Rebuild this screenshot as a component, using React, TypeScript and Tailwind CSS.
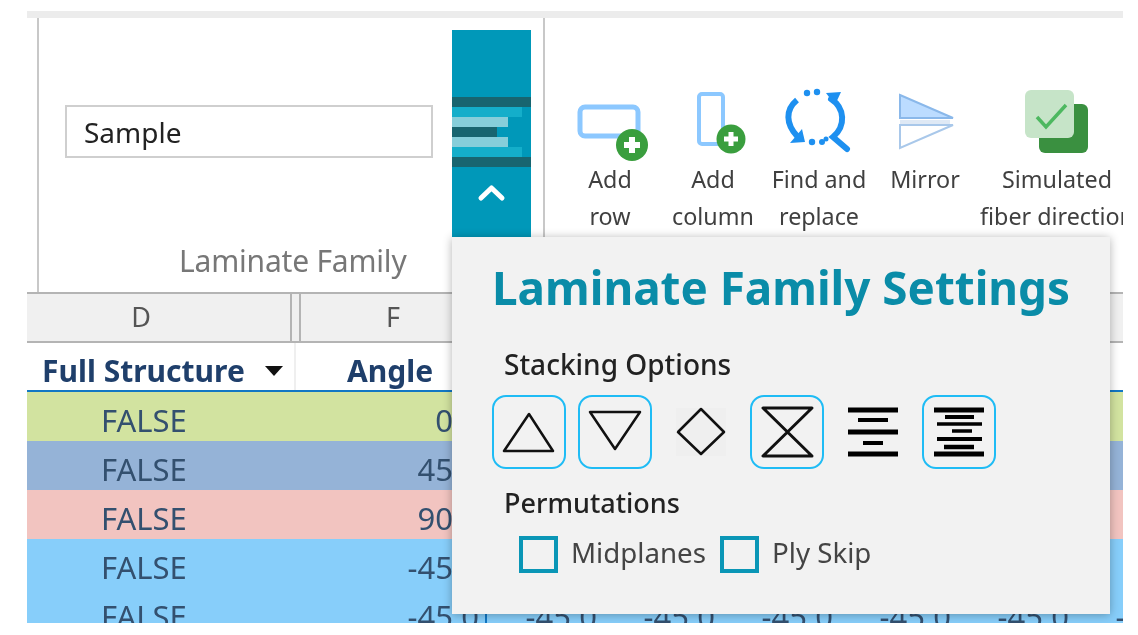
import React from "react";

const font = { fontFamily: '"Noto Sans", "Open Sans", sans-serif' };

function Action({ w, vx, lines, children }: { w: string; vx: number; lines: string[]; children: React.ReactNode }) {
  const width = parseInt(w.replace(/\D/g, ""), 10);
  return (
    <div className={`${w} shrink-0 flex flex-col items-center`}>
      <svg width={width} height={74} viewBox={`${vx} 88 ${width} 74`} className="shrink-0">
        {children}
      </svg>
      {lines.map((l) => (
        <div key={l} className="text-[23.3px] leading-[37px] pl-[2px] -mt-[1px] mb-[1px] whitespace-nowrap text-[#404040]">
          {l}
        </div>
      ))}
    </div>
  );
}

const AW = { a: "w-[128px]", b: "w-[78px]", c: "w-[134px]", d: "w-[78px]", e: "w-[186px]" };

function Stack({ on, children }: { on?: boolean; children: React.ReactNode }) {
  return (
    <div className={`w-[74px] h-[74px] rounded-[14px] border-2 ${on ? "border-[#1fbcf5]" : "border-transparent"}`}>
      <svg width={70} height={70} viewBox="0 0 70 70" fill="none" stroke="#111">
        {children}
      </svg>
    </div>
  );
}

function Check({ label }: { label: string }) {
  return (
    <div className="flex items-start">
      <div className="w-[39px] h-[37px] border-[4px] border-[#0a96b6]" />
      <div className="ml-[13px] text-[27.7px] leading-[33px] text-[#444]">{label}</div>
    </div>
  );
}

const rows = [
  { bg: "bg-[#d2e3a0]", a: "0.0" },
  { bg: "bg-[#95b3d7]", a: "45.0" },
  { bg: "bg-[#f2c4c0]", a: "90.0" },
  { bg: "bg-[#87cefa]", a: "-45.0" },
  { bg: "bg-[#87cefa]", a: "-45.0", more: true },
];

export default function App() {
  return (
    <div className="w-[1138px] h-[635px] bg-white overflow-hidden pt-[11px] pl-[27px] blur-[0.7px]" style={font}>
      <div className="relative w-[1096px] h-[612px] overflow-hidden">
        <div className="h-[7px] bg-[#ececec]" />

        {/* ribbon */}
        <div className="flex h-[274px]">
          <div className="ml-[10px] w-[508px] shrink-0 border-l-2 border-r-2 border-[#c8c8c8] flex">
            <div className="w-[413px] shrink-0 flex flex-col">
              <div className="ml-[26px] mt-[87px] w-[368px] h-[53px] border-2 border-[#cfcfcf] pl-[17px] text-[28px] leading-[51px] text-[#222]">
                Sample
              </div>
              <div className="ml-[140px] mt-[83px] text-[30px] leading-[40px] text-[#777] whitespace-nowrap tracking-[-0.2px]">
                Laminate Family
              </div>
            </div>
            <div className="w-[79px] h-[207px] mt-[12px] bg-[#0098b9] flex flex-col shrink-0">
              <div className="h-[67px]" />
              <div className="h-[10px] bg-[#186570]" />
              <div className="h-[10px] w-[70px] bg-[#14aeca]" />
              <div className="h-[10px] w-[56px] bg-[#86ceda]" />
              <div className="h-[10px] w-[45px] bg-[#186570]" />
              <div className="h-[10px] w-[56px] bg-[#86ceda]" />
              <div className="h-[10px] w-[70px] bg-[#14aeca]" />
              <div className="h-[10px] bg-[#186570]" />
              <svg width={79} height={40} viewBox="0 0 79 40" fill="none">
                <path d="M29 31 L39.5 21 L50 31" stroke="#fff" strokeWidth={5} strokeLinecap="round" strokeLinejoin="round" />
              </svg>
            </div>
          </div>

          <div className="flex pt-[70px]">
            <Action w={AW.a} vx={546} lines={["Add", "row"]}>
              <rect x={581} y={107} width={58} height={29} rx={5} fill="none" stroke="#8cc8ff" strokeWidth={5} />
              <circle cx={633} cy={145} r={16} fill="#3a9e3e" />
              <path d="M633 137 V153 M625 145 H641" stroke="#fff" strokeWidth={6} />
            </Action>
            <Action w={AW.b} vx={674} lines={["Add", "column"]}>
              <rect x={700} y={94} width={24} height={50} rx={3} fill="none" stroke="#8cc8ff" strokeWidth={4} />
              <circle cx={732} cy={139} r={14.5} fill="#3a9e3e" />
              <path d="M732 132 V146 M725 139 H739" stroke="#fff" strokeWidth={5} />
            </Action>
            <Action w={AW.c} vx={752} lines={["Find and", "replace"]}>
              <path d="M798 100 C786 110 787 124 798 136" fill="none" stroke="#1e90f0" strokeWidth={6} />
              <path d="M791 143 L806 142 L803 129 Z" fill="#1e90f0" />
              <path d="M832 99 C846 108 847 126 834 137 L848 149" fill="none" stroke="#1e90f0" strokeWidth={6} strokeLinecap="round" />
              <path d="M827 93 L842 92 L836 105 Z" fill="#1e90f0" />
              <circle cx={808} cy={93} r={3.2} fill="#1e90f0" />
              <circle cx={818} cy={92} r={3.2} fill="#1e90f0" />
              <circle cx={813} cy={142} r={3.2} fill="#1e90f0" />
              <circle cx={823} cy={142} r={3} fill="#1e90f0" />
              <circle cx={827} cy={139} r={2.5} fill="#1e90f0" />
            </Action>
            <Action w={AW.d} vx={886} lines={["Mirror"]}>
              <path d="M901 95 L954 118 L901 118 Z" fill="#bcdcff" stroke="#8ab8ea" strokeWidth={2} />
              <rect x={901} y={120} width={50} height={4} fill="#dfe9f5" />
              <path d="M901 125 L954 125 L901 148 Z" fill="none" stroke="#a9c8ea" strokeWidth={2} />
            </Action>
            <Action w={AW.e} vx={964} lines={["Simulated", "fiber direction"]}>
              <rect x={1040} y={104} width={49} height={49} rx={6} fill="#3a9040" />
              <rect x={1026} y={90} width={49} height={48} rx={6} fill="#c6e4c8" />
              <path d="M1038 117 L1047 127 L1067 105" fill="none" stroke="#4db860" strokeWidth={3.5} />
            </Action>
          </div>
        </div>

        {/* column letters */}
        <div className="h-[51px] border-t-2 border-b-2 border-[#b4b4b4] bg-[#f0f0f0] flex text-[#555] text-[27px] leading-[45px]">
          <div className="w-[265px] shrink-0 pr-[35px] text-center border-r-2 border-[#b4b4b4]">D</div>
          <div className="w-[9px] shrink-0 border-r-2 border-[#b4b4b4]" />
          <div className="w-[184px] shrink-0 text-center">F</div>
        </div>

        {/* table */}
        <div className="h-[49px] border-b-2 border-[#1277c4] flex font-bold text-[#1f3f6b] text-[30px] leading-[56px] whitespace-nowrap">
          <div className="w-[269px] shrink-0 border-r-2 border-[#efefef] flex items-start pl-[15px] relative">
            Full Structure
            <svg width={18} height={10} viewBox="0 0 18 10" className="absolute left-[238px] top-[23px]">
              <path d="M0 0 H18 L9 10 Z" fill="#111" />
            </svg>
          </div>
          <div className="ml-[51px]">Angle</div>
        </div>
        {rows.map((r, i) => (
          <div key={i} className={`${r.bg} h-[49px] flex text-[#33506f] text-[31px] leading-[56px] whitespace-nowrap`}>
            <div className="w-[269px] shrink-0 pl-[74px]">FALSE</div>
            <div className="relative w-[183px] shrink-0 text-right">
              {r.a}
              {r.more && <div className="absolute left-[189px] top-0 bottom-0 w-[2px] bg-[#1277c4]" />}
            </div>
            {r.more &&
              ["a", "b", "c", "d", "e", "f"].map((k) => (
                <div key={k} className="w-[118px] shrink-0 text-right">
                  -45.0
                </div>
              ))}
          </div>
        ))}

        {/* popover */}
        <div className="absolute left-[425px] top-[226px] w-[658px] h-[377px] bg-[#f2f2f2] shadow-[0_1px_9px_rgba(0,0,0,0.3)] px-[40px]">
          <div className="text-[45.8px] leading-[60px] mt-[20px] font-bold text-[#0a8ca8] whitespace-nowrap">
            Laminate Family Settings
          </div>
          <div className="ml-[12px] mt-[29px] text-[28px] leading-[36px] font-medium text-[#222]">Stacking Options</div>
          <div className="flex gap-[12px] mt-[13px]">
            <Stack on>
              <path d="M35 17 L10 54 H59 Z" strokeWidth={2.5} strokeLinejoin="round" />
            </Stack>
            <Stack on>
              <path d="M10 15 H60 L35 52 Z" strokeWidth={2.5} strokeLinejoin="round" />
            </Stack>
            <Stack>
              <rect x={10} y={11} width={50} height={48} fill="#efefef" stroke="none" />
              <path d="M35 12 L58 35 L35 57 L12 35 Z" strokeWidth={2.5} strokeLinejoin="round" />
            </Stack>
            <Stack on>
              <path d="M11 11 H60 L11 59 H60 Z" strokeWidth={3} strokeLinejoin="round" />
            </Stack>
            <Stack>
              <g stroke="#000">
                <path d="M10 13 H60" strokeWidth={5} />
                <path d="M20 23 H50" strokeWidth={4} />
                <path d="M10 35 H60" strokeWidth={5} />
                <path d="M25 46 H45" strokeWidth={4} />
                <path d="M10 57 H60" strokeWidth={5} />
              </g>
            </Stack>
            <Stack on>
              <g stroke="#000">
                <path d="M10 13 H60" strokeWidth={5} />
                <path d="M21 20 H50" strokeWidth={4} />
                <path d="M13 27 H58" strokeWidth={3.5} />
                <path d="M28 34 H48" strokeWidth={3.5} />
                <path d="M13 42 H58" strokeWidth={4} />
                <path d="M20 50 H50" strokeWidth={4.5} />
                <path d="M10 57 H60" strokeWidth={5} />
              </g>
            </Stack>
          </div>
          <div className="ml-[12px] mt-[16px] text-[27px] leading-[36px] font-medium text-[#222]">Permutations</div>
          <div className="flex ml-[27px] mt-[15px] gap-[14px]">
            <Check label="Midplanes" />
            <Check label="Ply Skip" />
          </div>
        </div>
      </div>
    </div>
  );
}
